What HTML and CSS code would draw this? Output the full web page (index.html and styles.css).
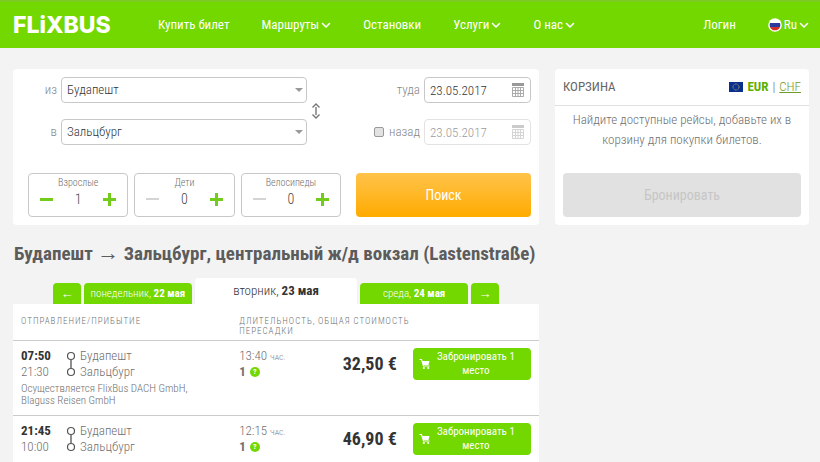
FILE: index.html
```html
<!DOCTYPE html>
<html lang="ru">
<head>
    <meta charset="UTF-8">
    <title>FlixBus - Будапешт → Зальцбург</title>
    <meta name="viewport" content="width=device-width, initial-scale=1">
    <link rel="stylesheet" href="styles.css">
</head>
<body>
    <!-- shared icons -->
    <svg class="sprite" width="0" height="0" aria-hidden="true">
        <symbol id="chevron" viewBox="0 0 10 8">
            <path d="M1.500 2.500L5 6l3.500-3.500" fill="none" stroke="currentColor" stroke-width="1.600" stroke-linecap="round" stroke-linejoin="round"/>
        </symbol>
        <symbol id="calendar" viewBox="0 0 12 14">
            <path d="M0 0h12v3H0z" fill="#999"/>
            <path d="M.5 4.500h11v9H.5zM3.500 4.500v9M6 4.500v9M8.500 4.500v9M.5 7.500h11M.5 10.500h11" fill="none" stroke="#aaa" stroke-width="1"/>
        </symbol>
        <symbol id="route" viewBox="0 0 10 26">
            <path d="M5 9v8" stroke="#444" stroke-width="1.200"/>
            <circle cx="5" cy="5" r="3.500" fill="none" stroke="#555" stroke-width="1.200"/>
            <circle cx="5" cy="21" r="3.500" fill="none" stroke="#555" stroke-width="1.200"/>
        </symbol>
        <symbol id="cart" viewBox="0 0 12 12">
            <path d="M.5 1.500h2l2 6.500h6" fill="none" stroke="#fff" stroke-width="1.200"/>
            <path d="M3 3h7.500l-1 4H4.300z" fill="#fff"/>
            <circle cx="4.800" cy="10" r="1.100" fill="#fff"/>
            <circle cx="9.200" cy="10" r="1.100" fill="#fff"/>
        </symbol>
    </svg>

    <header class="header">
        <a class="logo" href="#">FLiXBUS</a>
        <nav class="nav">
            <a href="#">Купить билет</a>
            <a href="#">Маршруты <svg class="chevron"><use href="#chevron"/></svg></a>
            <a href="#">Остановки</a>
            <a href="#">Услуги <svg class="chevron"><use href="#chevron"/></svg></a>
            <a href="#">О нас <svg class="chevron"><use href="#chevron"/></svg></a>
        </nav>
        <nav class="nav nav-user">
            <a href="#">Логин</a>
            <a href="#">
                <svg class="flag-ru" viewBox="0 0 14 14">
                    <circle cx="7" cy="7" r="6.800" fill="#fff"/>
                    <path d="M2 5h10a5.400 5.400 0 0 1 0 4H2a5.400 5.400 0 0 1 0-4z" fill="#2a3a9c"/>
                    <path d="M2 9h10a5.400 5.400 0 0 1-10 0z" fill="#d52b2b"/>
                </svg>
                Ru <svg class="chevron"><use href="#chevron"/></svg>
            </a>
        </nav>
    </header>

    <main class="page">
        <div class="content">
            <form class="card search">
                <div class="places">
                    <label for="from">из</label>
                    <div class="select">
                        <select id="from"><option>Будапешт</option></select>
                    </div>
                    <label for="to">в</label>
                    <div class="select">
                        <select id="to"><option>Зальцбург</option></select>
                    </div>
                    <button type="button" class="swap" aria-label="Поменять местами">
                        <svg width="10" height="18" viewBox="0 0 10 18">
                            <path d="M5 5v8M1.500 5.500L5 2l3.500 3.500M1.500 12.500L5 16l3.500-3.500" fill="none" stroke="#777" stroke-width="1.400"/>
                        </svg>
                    </button>
                </div>
                <div class="dates">
                    <label for="there">туда</label>
                    <div class="date">
                        <input type="text" id="there" value="23.05.2017">
                        <svg class="calendar"><use href="#calendar"/></svg>
                    </div>
                    <label class="back-label"><input type="checkbox" id="is-return"> назад</label>
                    <div class="date disabled">
                        <input type="text" id="back" value="23.05.2017" aria-label="Дата обратно" disabled>
                        <svg class="calendar"><use href="#calendar"/></svg>
                    </div>
                </div>
                <div class="counters">
                    <div class="counter">
                        <label for="adults">Взрослые</label>
                        <div class="counter-row">
                            <button type="button" class="minus" aria-label="Меньше"></button>
                            <input type="text" id="adults" value="1">
                            <button type="button" class="plus" aria-label="Больше"></button>
                        </div>
                    </div>
                    <div class="counter">
                        <label for="children">Дети</label>
                        <div class="counter-row">
                            <button type="button" class="minus" aria-label="Меньше" disabled></button>
                            <input type="text" id="children" value="0">
                            <button type="button" class="plus" aria-label="Больше"></button>
                        </div>
                    </div>
                    <div class="counter">
                        <label for="bikes">Велосипеды</label>
                        <div class="counter-row">
                            <button type="button" class="minus" aria-label="Меньше" disabled></button>
                            <input type="text" id="bikes" value="0">
                            <button type="button" class="plus" aria-label="Больше"></button>
                        </div>
                    </div>
                </div>
                <button type="submit" class="btn-search">Поиск</button>
            </form>

            <h1>Будапешт <span class="sign">→</span> Зальцбург, центральный ж/д вокзал (Lastenstraße)</h1>

            <div class="days">
                <button class="day arrow sign" aria-label="Раньше">←</button>
                <button class="day">понедельник, <b>22 мая</b></button>
                <button class="day active">вторник, <b>23 мая</b></button>
                <button class="day">среда, <b>24 мая</b></button>
                <button class="day arrow sign" aria-label="Позже">→</button>
            </div>

            <table class="rides">
                <colgroup>
                    <col class="col-ride">
                    <col class="col-time">
                    <col>
                    <col class="col-book">
                </colgroup>
                <thead>
                    <tr>
                        <th>Отправление/Прибытие</th>
                        <th>Длительность, пересадки</th>
                        <th colspan="2">Общая стоимость</th>
                    </tr>
                </thead>
                <tbody>
                    <tr>
                        <td>
                            <div class="ride">
                                <div class="times"><b>07:50</b><span>21:30</span></div>
                                <svg class="route"><use href="#route"/></svg>
                                <div class="stops"><span>Будапешт</span><span>Зальцбург</span></div>
                            </div>
                            <p class="operator">Осуществляется FlixBus DACH GmbH, Blaguss Reisen GmbH</p>
                        </td>
                        <td>
                            <div class="duration">13:40 <small>час.</small></div>
                            <div class="changes"><b>1</b> <span class="help">?</span></div>
                        </td>
                        <td class="price">32,50 €</td>
                        <td class="book">
                            <button class="btn-book"><svg class="cart"><use href="#cart"/></svg><span>Забронировать 1 место</span></button>
                        </td>
                    </tr>
                    <tr>
                        <td>
                            <div class="ride">
                                <div class="times"><b>21:45</b><span>10:00</span></div>
                                <svg class="route"><use href="#route"/></svg>
                                <div class="stops"><span>Будапешт</span><span>Зальцбург</span></div>
                            </div>
                        </td>
                        <td>
                            <div class="duration">12:15 <small>час.</small></div>
                            <div class="changes"><b>1</b> <span class="help">?</span></div>
                        </td>
                        <td class="price">46,90 €</td>
                        <td class="book">
                            <button class="btn-book"><svg class="cart"><use href="#cart"/></svg><span>Забронировать 1 место</span></button>
                        </td>
                    </tr>
                </tbody>
            </table>
        </div>

        <aside class="card basket">
            <div class="basket-head">
                <h2>КОРЗИНА</h2>
                <div class="currency">
                    <svg class="flag-eu" viewBox="0 0 14 10">
                        <path d="M0 0h14v10H0z" fill="#0b2f8f"/>
                        <circle cx="7" cy="5" r="3" fill="none" stroke="#a9a860" stroke-width="1" stroke-dasharray="1 .57"/>
                    </svg>
                    <b>EUR</b>
                    <span>|</span>
                    <a href="#">CHF</a>
                </div>
            </div>
            <p>Найдите доступные рейсы, добавьте их в корзину для покупки билетов.</p>
            <button class="btn-reserve" disabled>Бронировать</button>
        </aside>
    </main>
</body>
</html>
```
FILE: styles.css
```css
* {
    box-sizing: border-box;
}
body {
    margin: 0;
    background-color: #f3f3f3;
    color: #707070;
    font-family: "Roboto Condensed", Roboto, sans-serif;
    font-size: 13px;
    font-weight: 300;
    line-height: 16px;
    overflow: hidden;
}
b {
    font-weight: 700;
}
button, input, select {
    font: inherit;
    color: inherit;
    margin: 0;
    padding: 0;
}
button {
    border: none;
    background: none;
    cursor: pointer;
}
.sprite {
    position: absolute;
}
.sign {
    font-family: "Liberation Sans", sans-serif;
    font-weight: 400;
}

/* header */
.header {
    display: flex;
    align-items: center;
    height: 48px;
    padding: 0 11px 0 13px;
    background-color: #73d700;
    border-top: 2px solid #7ccb24;
}
.header a {
    color: #fff;
    text-decoration: none;
    white-space: nowrap;
}
.header .logo {
    width: 145px;
    font-family: Inter, sans-serif;
    font-size: 23px;
    font-weight: 800;
    line-height: 24px;
}
.nav {
    display: flex;
    gap: 32px;
    font-weight: 400;
}
.nav a {
    display: flex;
    align-items: center;
    gap: 2px;
}
.nav-user {
    margin-left: auto;
}
.chevron {
    width: 10px;
    height: 8px;
}
.flag-ru {
    width: 14px;
    height: 14px;
}

/* layout */
.page {
    display: grid;
    grid-template-columns: 526fr 254fr;
    gap: 16px;
    align-items: start;
    padding: 21px 11px 0 13px;
}
.card {
    background-color: #fff;
    border-radius: 4px;
}

/* search form */
.search {
    display: grid;
    grid-template-columns: 313fr 175fr;
    gap: 28px 15px;
    padding: 8px 8px 8px 15px;
}
.places, .dates {
    display: grid;
    align-items: center;
}
.places {
    grid-template-columns: 29px 1fr 10px;
    gap: 16px 4px;
    padding-right: 20px;
}
.places label, .dates label {
    text-align: right;
    color: #888;
}
.select {
    position: relative;
    grid-column: 2;
}
.select::after {
    content: "";
    position: absolute;
    right: 4px;
    top: 11px;
    border: 4px solid transparent;
    border-top-color: #999;
    pointer-events: none;
}
.select select, .date input {
    display: block;
    width: 100%;
    height: 26px;
    padding: 0 5px;
    border: 1px solid #c8c8c8;
    border-radius: 4px;
    background-color: #fff;
    color: #333;
    appearance: none;
}
.swap {
    grid-column: 3;
    grid-row: 1 / 3;
    height: 18px;
}
.swap svg {
    display: block;
}
.dates {
    grid-template-columns: 1fr 107px;
    gap: 16px 4px;
}
.date {
    position: relative;
}
.calendar {
    position: absolute;
    right: 7px;
    top: 6px;
    width: 12px;
    height: 14px;
}
.date.disabled {
    opacity: 0.5;
}
.back-label {
    display: flex;
    align-items: center;
    justify-content: flex-end;
    gap: 5px;
}
.back-label input {
    width: 10px;
    height: 10px;
    border: 1px solid #999;
    border-radius: 2px;
    background-color: #e2e2e2;
    appearance: none;
}
.counters {
    display: grid;
    grid-template-columns: repeat(3, 1fr);
    gap: 6px;
}
.counter {
    height: 44px;
    padding: 3px 10px 0;
    border: 1px solid #c8c8c8;
    border-radius: 4px;
    text-align: center;
}
.counter label {
    display: block;
    font-size: 10px;
    line-height: 12px;
}
.counter-row {
    display: flex;
    justify-content: space-between;
    align-items: center;
    height: 20px;
}
.counter-row input {
    width: 30px;
    border: none;
    text-align: center;
    color: #444;
    font-size: 14px;
}
.minus, .plus {
    width: 15px;
    height: 15px;
    background: linear-gradient(#73cb1c, #73cb1c) center / 13px 3px no-repeat;
}
.plus {
    background: linear-gradient(#73cb1c, #73cb1c) center / 13px 3px no-repeat,
        linear-gradient(#73cb1c, #73cb1c) center / 3px 13px no-repeat;
}
.minus:disabled {
    background: linear-gradient(#d4d4d4, #d4d4d4) center / 13px 2px no-repeat;
}
.btn-search {
    border-radius: 4px;
    background: linear-gradient(#ffc34b, #ffab00);
    color: #fff;
    font-size: 14px;
    font-weight: 400;
}

/* basket */
.basket-head {
    display: flex;
    justify-content: space-between;
    align-items: center;
    height: 37px;
    padding: 0 8px;
    border-bottom: 1px solid #e0e0e0;
}
.basket h2 {
    margin: 0;
    color: #666;
    font-size: 13px;
    font-weight: 400;
}
.currency {
    display: flex;
    align-items: center;
    gap: 4px;
}
.currency b {
    color: #5cb000;
}
.currency a {
    color: #6f9c2c;
}
.flag-eu {
    width: 14px;
    height: 10px;
}
.basket p {
    margin: 4px 14px 23px;
    text-align: center;
    line-height: 20px;
}
.btn-reserve {
    display: block;
    width: calc(100% - 16px);
    height: 44px;
    margin: 0 8px 8px;
    border-radius: 4px;
    background-color: #e1e1e1;
    color: #c6c6c6;
    font-size: 14px;
    font-weight: 400;
}

/* results */
h1 {
    margin: 17px 0 12px 1px;
    color: #5c5c5c;
    font-size: 19px;
    font-weight: 700;
    line-height: 24px;
    white-space: nowrap;
}
h1 .sign {
    font-size: 22px;
    line-height: 20px;
}
.days {
    display: flex;
    align-items: flex-end;
    gap: 3px;
    padding: 0 40px;
}
.day {
    flex: 107 0 0;
    height: 21px;
    border-radius: 4px 4px 0 0;
    background-color: #73d700;
    color: #fff;
    font-size: 11px;
    white-space: nowrap;
}
.day.arrow {
    flex-grow: 28;
    font-size: 13px;
}
.day.active {
    flex-grow: 162;
    height: 26px;
    background-color: #fff;
    color: #333;
    font-size: 13px;
}
.rides {
    width: 100%;
    border-collapse: collapse;
    table-layout: fixed;
    background-color: #fff;
}
.rides th {
    height: 36px;
    padding: 12px 0 0;
    font-size: 9px;
    font-weight: 300;
    line-height: 10px;
    letter-spacing: 1px;
    text-align: left;
    text-transform: uppercase;
    vertical-align: top;
}
.rides th:first-child, .rides td:first-child {
    padding-left: 8px;
}
.col-ride {
    width: 43%;
}
.col-time {
    width: 15%;
}
.col-book {
    width: 24%;
}
.rides td {
    padding: 7px 0 8px;
    border-top: 1px solid #ccc;
    vertical-align: top;
}
.ride {
    display: flex;
}
.times, .stops {
    display: flex;
    flex-direction: column;
}
.times {
    width: 45px;
}
.times b {
    color: #333;
}
.route {
    width: 10px;
    height: 26px;
    margin: 3px 4px 0 0;
}
.operator {
    width: 180px;
    margin: 3px 0 0;
    font-size: 11px;
    line-height: 12px;
}
.duration {
    height: 16px;
}
.duration small {
    font-size: 8px;
    text-transform: uppercase;
}
.changes {
    display: flex;
    align-items: center;
    gap: 4px;
}
.help {
    width: 10px;
    height: 10px;
    border-radius: 5px;
    background-color: #73d700;
    color: #fff;
    font-size: 8px;
    font-weight: 700;
    line-height: 10px;
    text-align: center;
}
.rides .price {
    padding: 13px 16px 0 0;
    color: #333;
    font-size: 18px;
    font-weight: 700;
    line-height: 20px;
    text-align: right;
    white-space: nowrap;
}
.rides .book {
    padding-right: 8px;
}
.btn-book {
    display: flex;
    align-items: center;
    width: 100%;
    height: 32px;
    padding: 0 10px 0 6px;
    border-radius: 4px;
    background-color: #73d700;
    color: #fff;
    font-size: 11px;
    font-weight: 400;
    line-height: 14px;
}
.btn-book span {
    flex: 1;
}
.cart {
    width: 12px;
    height: 12px;
}
```
